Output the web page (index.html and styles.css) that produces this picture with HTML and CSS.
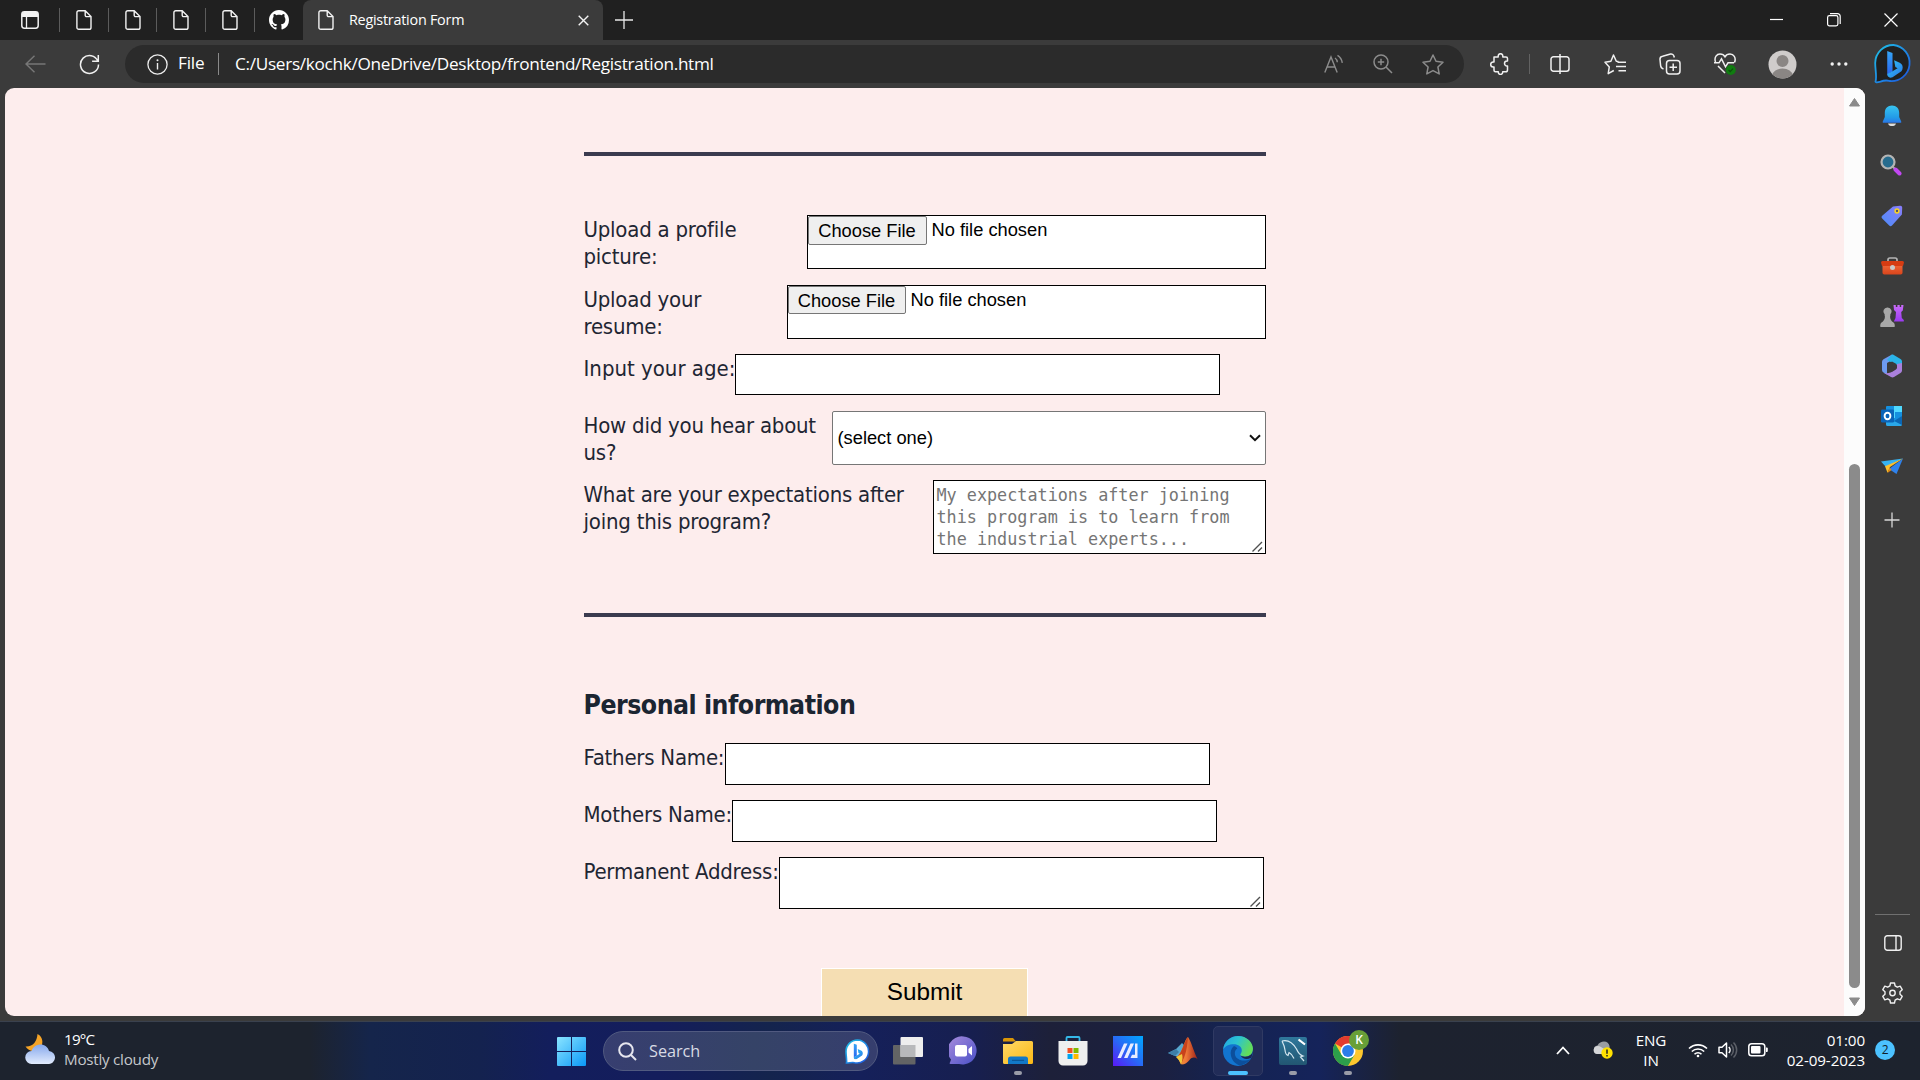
FILE: index.html
```html
<!DOCTYPE html>
<html lang="en">
<head>
<meta charset="utf-8">
<title>Registration Form</title>
<link rel="stylesheet" href="styles.css">
</head>
<body>
<svg class="defs" width="0" height="0" aria-hidden="true">
  <defs>
    <linearGradient id="gBlue" x1="0" y1="0" x2="1" y2="1"><stop offset="0" stop-color="#2fc6f5"/><stop offset="1" stop-color="#2a76e8"/></linearGradient>
    <linearGradient id="gBell" x1="0" y1="0" x2="0" y2="1"><stop offset="0" stop-color="#38c4f0"/><stop offset=".7" stop-color="#229be8"/><stop offset="1" stop-color="#2a76e8"/></linearGradient>
    <linearGradient id="gRing" x1="0" y1="0" x2="1" y2="1"><stop offset="0" stop-color="#1fc3e6"/><stop offset="1" stop-color="#1d52e0"/></linearGradient>
    <linearGradient id="gB" x1="0" y1="0" x2="0" y2="1"><stop offset="0" stop-color="#35a6f5"/><stop offset="1" stop-color="#2a65f0"/></linearGradient>
    <linearGradient id="gTag" x1="1" y1="0" x2="0" y2="1"><stop offset="0" stop-color="#8a7dfa"/><stop offset="1" stop-color="#4c8cf8"/></linearGradient>
    <linearGradient id="gOrange" x1="0" y1="0" x2="0" y2="1"><stop offset="0" stop-color="#f4703f"/><stop offset="1" stop-color="#d9451c"/></linearGradient>
    <linearGradient id="gPurple" x1="0" y1="0" x2="0" y2="1"><stop offset="0" stop-color="#c96cf8"/><stop offset="1" stop-color="#9a3af0"/></linearGradient>
    <linearGradient id="gWin" x1="0" y1="0" x2="1" y2="1"><stop offset="0" stop-color="#8ae4ff"/><stop offset="1" stop-color="#0a98f8"/></linearGradient>
    <linearGradient id="gCloud" x1="0" y1="0" x2="0" y2="1"><stop offset="0" stop-color="#86a8ec"/><stop offset="1" stop-color="#e2ecfd"/></linearGradient>
    <linearGradient id="gChat" x1="0" y1="0" x2="1" y2="1"><stop offset="0" stop-color="#a78bdc"/><stop offset="1" stop-color="#4a51c8"/></linearGradient>
    <linearGradient id="gFold" x1="0" y1="0" x2="1" y2="1"><stop offset="0" stop-color="#ffd968"/><stop offset="1" stop-color="#fbb815"/></linearGradient>
    <linearGradient id="gMu" x1="0" y1="1" x2="1" y2="0"><stop offset="0" stop-color="#5a18f5"/><stop offset=".5" stop-color="#276bf6"/><stop offset="1" stop-color="#00a8ff"/></linearGradient>
    <linearGradient id="gMat" x1="0" y1="0" x2="1" y2="0"><stop offset="0" stop-color="#e8a030"/><stop offset=".45" stop-color="#f0793a"/><stop offset="1" stop-color="#a02418"/></linearGradient>
    <linearGradient id="gEdgeTop" x1="0" y1="0" x2="1" y2=".4"><stop offset="0" stop-color="#22a3e4"/><stop offset=".5" stop-color="#2cc4d0"/><stop offset="1" stop-color="#62dc5a"/></linearGradient>
    <linearGradient id="gSql" x1="0" y1="0" x2="0" y2="1"><stop offset="0" stop-color="#2f789c"/><stop offset="1" stop-color="#225672"/></linearGradient>
    <symbol id="page" viewBox="0 0 16 20"><path d="M2.8.8h6.4L15 6.600v10.800a1.900 1.900 0 0 1-1.900 1.900H2.800A1.900 1.900 0 0 1 .9 17.400V2.700A1.900 1.900 0 0 1 2.800.8zM9.200.8v4.400a1.400 1.400 0 0 0 1.400 1.400H15" fill="none" stroke="#f2f2f2" stroke-width="1.400"/></symbol>
    <symbol id="bing" viewBox="0 0 14 24"><path d="M0 0l4.800 1.800v16.400L0 21z" fill="url(#gB)"/><path d="M6.200 8.200l5 2.300c3 1.500 3.500 5 1.500 7.500L4.800 23.300C2 24.400 0 23 0 20.500l4.800-2.600 4.500-2.600-2-1z" fill="url(#gBlue)"/></symbol>
  </defs>
</svg>

<div class="screen">
  <header class="tabs">
    <div class="tab-cell first"><svg width="18" height="18" viewBox="0 0 18 18"><rect x=".8" y=".8" width="16.400" height="16.400" rx="2.600" fill="none" stroke="#f2f2f2" stroke-width="1.500"/><path d="M1 3a2 2 0 0 1 2-2h12a2 2 0 0 1 2 2v3H1z" fill="#f2f2f2"/><path d="M5.500 6v11" stroke="#f2f2f2" stroke-width="1.300"/></svg></div>
    <div class="tab-cell"><svg width="16" height="20"><use href="#page"/></svg></div>
    <div class="tab-cell"><svg width="16" height="20"><use href="#page"/></svg></div>
    <div class="tab-cell"><svg width="16" height="20"><use href="#page"/></svg></div>
    <div class="tab-cell"><svg width="16" height="20"><use href="#page"/></svg></div>
    <div class="tab-cell last"><svg width="20" height="20" viewBox="0 0 16 16"><path fill="#fff" d="M8 0C3.580 0 0 3.580 0 8c0 3.540 2.290 6.530 5.470 7.590.4.070.55-.17.55-.38 0-.19-.01-.82-.01-1.490-2.010.37-2.530-.49-2.690-.94-.09-.23-.48-.94-.82-1.130-.28-.15-.68-.52-.01-.53.63-.01 1.080.58 1.230.82.72 1.210 1.870.87 2.330.66.07-.52.28-.87.51-1.070-1.780-.2-3.640-.89-3.640-3.950 0-.87.31-1.590.82-2.150-.08-.2-.36-1.020.08-2.120 0 0 .67-.21 2.200.82.64-.18 1.320-.27 2-.27s1.360.09 2 .27c1.530-1.040 2.200-.82 2.200-.82.44 1.100.16 1.920.08 2.120.51.56.82 1.270.82 2.150 0 3.070-1.870 3.750-3.650 3.950.29.25.54.73.54 1.480 0 1.070-.01 1.930-.01 2.200 0 .21.15.46.55.38A8.010 8.010 0 0 0 16 8c0-4.420-3.580-8-8-8z"/></svg></div>
    <div class="active-tab">
      <svg width="16" height="20"><use href="#page"/></svg>
      <span class="tab-title">Registration Form</span>
      <svg class="tab-close" width="11" height="11" viewBox="0 0 11 11"><path d="M.7.7l9.600 9.600M10.300.7L.7 10.300" stroke="#f2f2f2" stroke-width="1.400"/></svg>
    </div>
    <svg class="new-tab" width="18" height="18" viewBox="0 0 18 18"><path d="M9 0v18M0 9h18" stroke="#e8e8e8" stroke-width="1.300"/></svg>
    <div class="window-buttons">
      <svg width="14" height="14" viewBox="0 0 14 14"><path d="M0 6.500h13" stroke="#fff" stroke-width="1.200"/></svg>
      <svg width="14" height="14" viewBox="0 0 14 14"><rect x=".6" y="2.600" width="10.300" height="10.300" rx="1.800" fill="none" stroke="#fff" stroke-width="1.200"/><path d="M3 .7h7.500a2.600 2.600 0 0 1 2.700 2.700V11" fill="none" stroke="#fff" stroke-width="1.200"/></svg>
      <svg width="14" height="14" viewBox="0 0 14 14"><path d="M.5.5l13 13M13.500.5l-13 13" stroke="#fff" stroke-width="1.200"/></svg>
    </div>
  </header>

  <div class="toolbar">
    <div class="nav">
      <svg width="21" height="18" viewBox="0 0 21 18"><path d="M9.500.7L1 9l8.500 8.300M1 9h19.500" fill="none" stroke="#777" stroke-width="1.400"/></svg>
      <svg width="21" height="21" viewBox="0 0 21 21"><path d="M18.800 7A9 9 0 1 0 19.500 10.500M19.300 1v6.200h-6.200" fill="none" stroke="#f0f0f0" stroke-width="1.500"/></svg>
    </div>
    <div class="address">
      <svg width="21" height="21" viewBox="0 0 21 21"><circle cx="10.500" cy="10.500" r="9.600" fill="none" stroke="#eee" stroke-width="1.300"/><path d="M10.500 9v6.500" stroke="#eee" stroke-width="1.400"/><circle cx="10.500" cy="6.200" r="1" fill="#eee"/></svg>
      <span class="scheme">File</span>
      <span class="url">C:/Users/kochk/OneDrive/Desktop/frontend/Registration.html</span>
      <div class="address-icons">
        <svg width="20" height="20" viewBox="0 0 20 20" fill="none" stroke="#8c8c8c" stroke-width="1.400"><path d="M.8 18.500L7 3l6.200 15.500M3 13h8M11 4c1.500 1 2.200 2.500 2.300 4.300M13.500 1.300c2.500 1.500 4.300 4 4.800 7.500"/></svg>
        <svg width="20" height="20" viewBox="0 0 20 20" fill="none" stroke="#8c8c8c" stroke-width="1.500"><circle cx="8" cy="8" r="7"/><path d="M13 13l6 6M8 4.800v6.400M4.800 8h6.400"/></svg>
        <svg width="22" height="21" viewBox="0 0 22 21" fill="none" stroke="#8c8c8c" stroke-width="1.500" stroke-linejoin="round"><path d="M11 1l3 6.300 7 .9-5.100 4.800 1.300 6.900L11 16.600l-6.200 3.300L6.100 13 1 8.200l7-.9z"/></svg>
      </div>
    </div>
    <div class="ext"><svg width="20" height="22" viewBox="0 0 20 22" fill="none" stroke="#f0f0f0" stroke-width="1.500" stroke-linejoin="round"><path d="M4 4h4.200V3a2.300 2.300 0 0 1 4.600 0v1H16a1.500 1.500 0 0 1 1.500 1.500V8H17a2 2 0 0 0 0 5h.5v4a1.800 1.800 0 0 1-1.800 1.800h-3v.4a2.200 2.200 0 0 1-4.400 0v-.4H5.500A1.500 1.500 0 0 1 4 17.300V14h-.8a2.500 2.500 0 0 1 0-5H4z"/></svg></div>
    <div class="tools">
      <svg width="20" height="20" viewBox="0 0 20 20" fill="none" stroke="#f0f0f0" stroke-width="1.500"><path d="M7 2.500H3.500A2.500 2.500 0 0 0 1 5v10a2.500 2.500 0 0 0 2.500 2.500H7M10 2.500H7v15h3M13 2.500h3.500A2.500 2.500 0 0 1 19 5v10a2.500 2.500 0 0 1-2.500 2.500H10" stroke="none"/><path d="M9.800 2.700H3.500A2.500 2.500 0 0 0 1 5.200v9.600a2.500 2.500 0 0 0 2.500 2.500h6.300M10.200 2.700h6.300A2.500 2.500 0 0 1 19 5.200v9.600a2.500 2.500 0 0 1-2.500 2.500h-6.300M10 0v20"/></svg>
      <svg width="22" height="21" viewBox="0 0 22 21" fill="none" stroke="#f0f0f0" stroke-width="1.500" stroke-linejoin="round"><path d="M14.500 7.600l-2.200-.3L9.500 1 6.900 7.300 1 8.200l4.300 4.700-1.100 6.800 5.600-3.200M13.500 8.300H22M12 12.500h10M14.500 16.700H22"/></svg>
      <svg width="22" height="22" viewBox="0 0 22 22" fill="none" stroke="#f0f0f0" stroke-width="1.500"><rect x="7.500" y="7.500" width="13.500" height="13.500" rx="3"/><path d="M14.200 10.500v7.500M10.500 14.200H18M4.500 16A4 4 0 0 1 1.600 12.500L1 6.500a3 3 0 0 1 2.600-3.200L11.500 1a3 3 0 0 1 3.500 2.500l.3 1"/></svg>
      <svg width="22" height="22" viewBox="0 0 22 22" fill="none" stroke="#f0f0f0" stroke-width="1.500"><path d="M1.500 9C-.2 4 3 1 6 1c2.200 0 4 1 5 2.800C12 2 14 1 16 1c3.500 0 6.500 3.500 4.500 8.500M0 9.800h5l2.500-4 4 8 2.500-4H20M4 13l7 7"/><circle cx="16.800" cy="17" r="5" fill="#107c10" stroke="none"/><path d="M14.600 17l1.600 1.600 2.800-3" stroke="#0b4f0b" stroke-width="1.200"/></svg>
      <svg class="wide" width="29" height="29" viewBox="0 0 29 29"><defs><clipPath id="av"><circle cx="14.500" cy="14.500" r="14"/></clipPath></defs><circle cx="14.500" cy="14.500" r="14" fill="#cfcccb"/><g clip-path="url(#av)" fill="#8a8684"><circle cx="14.500" cy="11" r="6"/><ellipse cx="14.500" cy="25" rx="10" ry="6.500"/></g></svg>
      <svg width="18" height="6" viewBox="0 0 18 6" fill="#f2f2f2"><circle cx="2.200" cy="3" r="1.700"/><circle cx="9" cy="3" r="1.700"/><circle cx="15.800" cy="3" r="1.700"/></svg>
    </div>
    <div class="copilot"><svg width="39" height="40" viewBox="0 0 39 40"><path d="M19.500 1a18 18 0 1 1-4 36c-3-1-6-.5-9 .7-4 1-5.500.8-4.900-.7C3 33 1.200 26 1.200 19A18.200 18.200 0 0 1 19.500 1z" fill="#202020" stroke="url(#gRing)" stroke-width="1.800"/><svg x="12.500" y="7" width="17" height="27" viewBox="0 0 14 24"><use href="#bing" width="14" height="24"/></svg></svg></div>
  </div>

  <div class="middle">
    <main class="viewport">
      <div class="document">
        <form class="form">
          <section class="group upload">
            <div class="row"><label class="w-pic">Upload a profile picture:</label><div class="box file"><button type="button">Choose File</button><span>No file chosen</span></div></div>
            <div class="row"><label class="w-res">Upload your resume:</label><div class="box file"><button type="button">Choose File</button><span>No file chosen</span></div></div>
            <div class="row"><label class="w-age">Input your age:</label><input class="box line age" type="text"></div>
            <div class="row"><label class="w-hear">How did you hear about us?</label><div class="box select"><span>(select one)</span><svg width="12" height="8" viewBox="0 0 12 8"><path d="M1 1.200l5 5 5-5" fill="none" stroke="#111" stroke-width="2"/></svg></div></div>
            <div class="row"><label class="w-exp">What are your expectations after joing this program?</label><textarea class="box grip expect" placeholder="My expectations after joining this program is to learn from the industrial experts..."></textarea></div>
          </section>
          <section class="group personal">
            <h2>Personal information</h2>
            <div class="row"><label class="w-father">Fathers Name:</label><input class="box line" type="text"></div>
            <div class="row"><label class="w-mother">Mothers Name:</label><input class="box line" type="text"></div>
            <div class="row"><label class="w-addr">Permanent Address:</label><textarea class="box grip addr"></textarea></div>
          </section>
          <button class="submit" type="button">Submit</button>
        </form>
      </div>
      <div class="scroll">
        <svg width="11" height="9" viewBox="0 0 11 9"><path d="M5.500.5L10.500 8h-10z" fill="#8b8b8b" stroke="#8b8b8b" stroke-linejoin="round"/></svg>
        <div class="thumb"></div>
        <svg width="11" height="9" viewBox="0 0 11 9"><path d="M5.500 8.500L10.500 1h-10z" fill="#8b8b8b" stroke="#8b8b8b" stroke-linejoin="round"/></svg>
      </div>
    </main>
    <aside class="sidebar">
      <div class="cell"><svg width="20" height="22" viewBox="0 0 20 22"><path d="M6 18.500h8c-1 2.500-2.500 2.500-4 2.500s-3 0-4-2.500z" fill="#ddd"/><path d="M10 .5c4.300 0 7.200 3 7.200 7.200V12l2 4.500c.3.800 0 1.300-.8 1.300H1.600c-.8 0-1.100-.5-.8-1.300l2-4.500V7.700C2.800 3.500 5.700.5 10 .5z" fill="url(#gBell)"/></svg></div>
      <div class="cell mag"><svg width="22" height="22" viewBox="0 0 22 22"><path d="M12 12l4 4" stroke="#aaa" stroke-width="2"/><path d="M15.500 15.500l4 4" stroke="#c247f2" stroke-width="4" stroke-linecap="round"/><circle cx="8" cy="8" r="6.500" fill="#276c8e" stroke="#b4b4b4" stroke-width="2.200"/></svg></div>
      <div class="cell"><svg width="22" height="22" viewBox="0 0 22 22"><path d="M12 1.500l7-.8a2 2 0 0 1 2.200 2.100l-.3 6.700L11 20.500a2 2 0 0 1-2.800 0L1.200 13.500a2 2 0 0 1 0-2.800z" fill="url(#gTag)"/><circle cx="16" cy="6" r="1.900" fill="#4b5170" stroke="#f9d324" stroke-width="1.500"/></svg></div>
      <div class="cell"><svg width="23" height="18" viewBox="0 0 23 18"><path d="M7 5V2.800A1.800 1.800 0 0 1 8.800 1h5.400A1.800 1.800 0 0 1 16 2.800V5" fill="none" stroke="#b4b4b4" stroke-width="1.700"/><rect x="1.500" y="5" width="20" height="12.500" rx="1.800" fill="url(#gOrange)"/><path d="M0 5.500A1.500 1.500 0 0 1 1.500 4h20A1.500 1.500 0 0 1 23 5.500L22 9H1z" fill="#d63c12"/><circle cx="11.500" cy="10.500" r="2.500" fill="#c9c9c9"/></svg></div>
      <div class="cell"><svg width="24" height="24" viewBox="0 0 24 24"><path d="M13.500 1h2.300v2h1.600V1h2.300v2h1.500V1h2.300l-.7 5.500-1.600 1.500.6 6 2 2v1.500h-10l1.700-3.500.5-6-2-2z" fill="url(#gPurple)"/><path d="M7.500 3.500a4 4 0 0 1 2.800 7v1.700H10c.2 3.300 1.300 4.800 3.500 6.300 1.500 1 1.500 4 1 4.500H.5c-.5-.5-.5-3.500 1-4.500C3.700 17 4.800 15.500 5 12.200h-.3v-1.700a4 4 0 0 1 2.800-7z" fill="#a8a8a8"/></svg></div>
      <div class="cell"><svg width="22" height="24" viewBox="0 0 22 24"><path d="M11 .5L2.500 5.300A3 3 0 0 0 1 8v8a3 3 0 0 0 1.500 2.500L6 20.500V9l7-4z" fill="#6d9af0"/><path d="M11 .5h1L19.500 5A3 3 0 0 1 21 7.500V14l-5.500-3-9.500-5z" fill="#2ab4e8"/><path d="M21 9v7.500a3 3 0 0 1-1.500 2.500L13 23a3 3 0 0 1-3 0l-7-4c4 .5 7 0 11-3l2-2V10z" fill="#aa80dc"/><path d="M11 7.500l4.500 2.500v5L11 17.500 6.500 15v-5z" fill="#3b3b3b"/></svg></div>
      <div class="cell"><svg width="22" height="22" viewBox="0 0 22 22"><rect x="5" y="1" width="16" height="17" rx="1" fill="#1590df"/><path d="M13 1h8v6h-8zM9 7h5v6H9z" fill="#50d9ff"/><path d="M5 12l8 5 8-6v8.500a1.500 1.500 0 0 1-1.500 1.500h-13A1.500 1.500 0 0 1 5 19.500z" fill="#2aa8ea"/><path d="M21 11v9l-8-4z" fill="#0b66b4"/><rect x="0" y="4.500" width="13" height="13" rx="1.200" fill="#0a64b8"/><ellipse cx="6.500" cy="11" rx="2.900" ry="3.300" fill="none" stroke="#fff" stroke-width="1.900"/></svg></div>
      <div class="cell"><svg width="22" height="17" viewBox="0 0 22 17"><path d="M0 3.500L22 .5 5 9z" fill="#35b2f2"/><path d="M22 .5L15.500 16 8 11z" fill="#2f82ec"/><path d="M22 .5L4 8.200l2.500 6.500L9 9z" fill="#fbc02c"/><path d="M8.500 9.500L6.500 15l4-3z" fill="#e98a10"/></svg></div>
      <div class="cell plus"><svg width="16" height="16" viewBox="0 0 16 16"><path d="M8 .5v15M.5 8h15" stroke="#d8d8d8" stroke-width="1.300"/></svg></div>
      <div class="side-bottom">
        <svg width="18" height="16" viewBox="0 0 18 16" fill="none" stroke="#f0f0f0" stroke-width="1.400"><rect x=".8" y=".8" width="16.400" height="14.400" rx="2.500"/><path d="M12 1v14"/></svg>
        <svg width="21" height="22" viewBox="0 0 21 22" fill="none" stroke="#f0f0f0" stroke-width="1.400" stroke-linejoin="round"><path d="M8.500 1h4l.6 2.900 2.200 1.300 2.900-1 2 3.500-2.200 2v2.600l2.200 2-2 3.500-2.900-1-2.200 1.300-.6 2.900h-4l-.6-2.900-2.200-1.300-2.900 1-2-3.500 2.200-2V9.700l-2.200-2 2-3.500 2.900 1 2.200-1.300z"/><circle cx="10.500" cy="11" r="2.700"/></svg>
      </div>
    </aside>
  </div>

  <footer class="taskbar">
    <div class="weather">
      <svg width="30" height="30" viewBox="0 0 30 30"><path d="M12.500 0c6 3 6.500 11 1.500 15-4.500 3.500-11 2-13.500-2.500C8 13 12 7.500 12.500 0z" fill="#f5a428"/><path d="M7 30a6.500 6.500 0 0 1-.5-13C8 12.500 12 10.500 15.500 10.500c4 0 7.500 2.500 8.500 6.500a6.500 6.500 0 0 1-1 13z" fill="url(#gCloud)"/></svg>
      <div class="weather-text"><span class="temp">19°C</span><span class="sky">Mostly cloudy</span></div>
    </div>
    <svg class="start" width="29" height="29" viewBox="0 0 29 29" fill="url(#gWin)"><path d="M1 0h13v14H0V1a1 1 0 0 1 1-1zM15 0h13a1 1 0 0 1 1 1v13H15zM0 15h14v14H1a1 1 0 0 1-1-1zM15 15h14v13a1 1 0 0 1-1 1H15z"/></svg>
    <div class="search">
      <svg width="19" height="19" viewBox="0 0 19 19" fill="none" stroke="#e6e6ee" stroke-width="2"><circle cx="8" cy="8" r="6.800"/><path d="M13 13l5 5"/></svg>
      <span>Search</span>
      <svg class="search-bing" width="25" height="25" viewBox="0 0 25 25"><path d="M12.500 1a11.500 11.500 0 1 1-3 22.700c-2-.8-5 .3-8 .3.5-3-.5-7-.5-11.500A11.500 11.500 0 0 1 12.500 1z" fill="#fff" stroke="url(#gRing)" stroke-width="1.600"/><svg x="8" y="4.500" width="10.500" height="16" viewBox="0 0 14 24"><use href="#bing" width="14" height="24"/></svg></svg>
    </div>
    <div class="apps">
      <div class="app"><svg width="30" height="28" viewBox="0 0 30 28"><rect x="0" y="8" width="22.500" height="19.500" rx="1" fill="#636465"/><rect x="7.500" y="0" width="22.500" height="20" rx="1" fill="#eee"/><path d="M7.500 8h15v12h-15z" fill="#b8b9bb"/></svg></div>
      <div class="app"><svg width="29" height="29" viewBox="0 0 29 29"><path d="M14.500.5A14 14 0 1 1 10 28H1.500C.5 28 .3 27 1 26.500l1-3A14 14 0 0 1 14.500.5z" fill="url(#gChat)"/><rect x="6" y="9" width="12" height="11.500" rx="2" fill="#fff"/><path d="M19.500 13l3.500-3v9.500l-3.500-3z" fill="#fff"/></svg></div>
      <div class="app run"><svg width="30" height="28" viewBox="0 0 30 28"><path d="M0 2.500A1.500 1.500 0 0 1 1.500 1H10l3 3.500H0z" fill="#d99507"/><path d="M0 7h9l4-3h15.500A1.500 1.500 0 0 1 30 5.500v20a1.500 1.500 0 0 1-1.500 1.500h-27A1.500 1.500 0 0 1 0 25.500z" fill="url(#gFold)"/><path d="M5 27v-5a2.500 2.500 0 0 1 2.500-2.500h15A2.500 2.500 0 0 1 25 22v5z" fill="#1278c8"/><path d="M9 23.300h12" stroke="#0a4f8c"/></svg></div>
      <div class="app"><svg width="30" height="30" viewBox="0 0 30 30"><path d="M8.500 6V2a1 1 0 0 1 1-1h11a1 1 0 0 1 1 1v4" fill="none" stroke="#35b8e8" stroke-width="1.800"/><path d="M.5 5h29v20a4.500 4.500 0 0 1-4.500 4.500H5A4.500 4.500 0 0 1 .5 25z" fill="#efefef"/><path d="M9.500 12h5v5h-5z" fill="#f25022"/><path d="M15.500 12h5v5h-5z" fill="#7fba00"/><path d="M9.500 18h5v5h-5z" fill="#00a4ef"/><path d="M15.500 18h5v5h-5z" fill="#ffb900"/></svg></div>
      <div class="app"><svg width="30" height="30" viewBox="0 0 30 30"><path d="M0 0h30v30H0z" fill="url(#gMu)"/><path d="M4.500 22L11 7.500h3.500L8 22zM11 22l6.500-14.500H21L14.500 22zM22 7.500h2.500V22H17.500l1.500-3.300h3z" fill="#e8ecff"/></svg></div>
      <div class="app"><svg width="30" height="28" viewBox="0 0 30 28"><path d="M0 16l8-4 6-6 2 2-5 12-4-1z" fill="#58a8cf"/><path d="M0 16l8-4 3 3-4 4z" fill="#3d7ea8"/><path d="M20 0c3 4 5.500 14 9.500 22-3-2-5.500-2-8 1-2 2.500-4.500 4.500-8 4.500-1-3-2.500-5-5-7.500C14 17 16.500 2 20 0z" fill="url(#gMat)"/><path d="M20 0c-.5 8-2 20-7.500 27-1-3-1.500-5-4-7C14 17 16 4 20 0z" fill="#c8421c"/><path d="M14 17c1 3 .5 7-1 10.500-1-3-2.500-5-5-7.500z" fill="#f0c83c"/></svg></div>
      <div class="app run current"><svg width="30" height="30" viewBox="0 0 30 30"><circle cx="15" cy="15" r="15" fill="#1274cf"/><path d="M.2 13.500C1 5.500 7.500 0 15 0c9 0 15 6.500 15 13 0 5-3.500 7.700-8 7.700-3 0-4.700-1-4.700-2.200 0-.8 1.500-1.500 1.500-4.300 0-3.500-3.600-6-8-6C6 8.200 2 10 .2 13.500z" fill="url(#gEdgeTop)"/><path d="M11 10c-3 2.500-4 6-3 10 1.300 5 5 8.500 9 9.500 4-.6 8-3 10.500-6.500-6 3-14 1.500-15.500-4-.5-3 .3-5.500 2.300-6.500C13.800 11.200 12.500 10.500 11 10z" fill="#0c4f9c"/><path d="M30 13c0 5-3.500 7.700-8 7.700-2 0-3.500-.5-4.300-1.200C19 23 24 24 27.500 22l.5 1c1-2.500 2.200-6.500 2-10z" fill="#1b2552"/></svg></div>
      <div class="app run"><svg width="28" height="28" viewBox="0 0 28 28"><rect width="28" height="28" rx="2" fill="url(#gSql)"/><path d="M3 4c6-1.500 11 2 14.500 8 1.500 3.500 3 6 6.500 7l-2.500 1 3.500 4M3 4c1.500 3 2.500 5 3 9 .3 3 1.500 5 3 5.500l1-3c2 1 4 3.500 5 6" fill="none" stroke="#d5e7f0" stroke-width="1.200"/><path d="M20 2l2 3 3 1 1 2-6-4z" fill="#fff"/><path d="M19.500 2.500L26 7.500" stroke="#fff" stroke-width="2.200"/></svg></div>
      <div class="app run chrome"><svg width="30" height="30" viewBox="0 0 30 30"><circle cx="15" cy="15" r="15" fill="#fdc72e"/><path d="M15 15L2 7.500A15 15 0 0 1 28 7.500H15z" fill="#e33b2e"/><path d="M2 7.500A15 15 0 0 0 15 30l6.500-11.200L15 15 8.500 18.700z" fill="#2c9f4b"/><circle cx="15" cy="15" r="7.500" fill="#fff"/><circle cx="15" cy="15" r="5.900" fill="#2b7de9"/></svg><span class="k-badge">K</span></div>
    </div>
    <div class="tray">
      <svg class="chev" width="14" height="9" viewBox="0 0 14 9"><path d="M1 8l6-6.500L13 8" fill="none" stroke="#fff" stroke-width="1.800"/></svg>
      <svg class="cloud" width="20" height="18" viewBox="0 0 20 18"><path d="M4.500 13a4.300 4.300 0 0 1 0-8.500C6 1.500 8.500.5 11 .5c3 0 5 2 5.500 4.500L17 13z" fill="#9a9da1"/><path d="M1 11C0 8 1.500 5.500 4.500 5c3 0 4 1.500 7 3l-2 5H4C2.500 13 1.500 12 1 11z" fill="#d5d6d8"/><circle cx="14" cy="12" r="5.700" fill="#ffe100"/><path d="M14 8.500v4.200M14 14v1.500" stroke="#222" stroke-width="1.500"/></svg>
      <div class="lang"><span>ENG</span><span>IN</span></div>
      <div class="status">
        <svg width="20" height="15" viewBox="0 0 20 15" fill="none" stroke="#fff" stroke-width="1.600"><path d="M1 5.500a13 13 0 0 1 18 0M3.800 8.500a9 9 0 0 1 12.400 0M6.500 11.300a5 5 0 0 1 7 0"/><circle cx="10" cy="13" r="1.300" fill="#fff" stroke="none"/></svg>
        <svg width="20" height="18" viewBox="0 0 20 18" fill="none" stroke="#fff" stroke-width="1.500"><path d="M1 6.200h3L8.500 2v14L4 11.800H1z" stroke-linejoin="round"/><path d="M10.800 6a4.300 4.300 0 0 1 0 6"/><path d="M13 3.500a7.500 7.500 0 0 1 0 11M15.500 1.500a10.500 10.500 0 0 1 0 15" stroke="#5c6068"/></svg>
        <svg width="20" height="14" viewBox="0 0 20 14"><rect x=".8" y=".8" width="16" height="12" rx="2.800" fill="none" stroke="#fff" stroke-width="1.500"/><rect x="3" y="3" width="9.500" height="7.600" rx="1" fill="#fff"/><path d="M18 4.500h.8a1 1 0 0 1 1 1v2.500a1 1 0 0 1-1 1H18z" fill="#fff"/></svg>
      </div>
      <div class="clock"><span>01:00</span><span>02-09-2023</span></div>
      <span class="count">2</span>
    </div>
  </footer>
</div>
</body>
</html>
```
FILE: styles.css
```css
* { box-sizing: border-box; }

body {
  margin: 0;
  background: #3b3b3b;
  overflow: hidden;
  font-family: "Open Sans", "Noto Sans", sans-serif;
}

.defs { display: block; position: absolute; }
svg { display: block; flex: none; }

.screen {
  width: 1920px;
  height: 1080px;
  display: grid;
  grid-template-rows: 40px 48px 933px 59px;
}

/* Tab strip */
.tabs { display: flex; align-items: center; background: #202020; }
.tab-cell {
  width: 48.7px;
  height: 24px;
  display: flex;
  align-items: center;
  justify-content: center;
  border-right: 1px solid #5c5c5c;
}
.tab-cell.first { width: 60px; }
.tab-cell.last { width: 48.2px; border: 0; }
.active-tab {
  width: 300px;
  height: 40px;
  display: flex;
  align-items: center;
  padding: 0 14px 0 15px;
  background: #3b3b3b;
  border-radius: 8px 8px 0 0;
}
.tab-title { margin-left: 15px; padding-bottom: 2px; font-size: 14.4px; letter-spacing: -0.25px; color: #fff; }
.tab-close { margin-left: auto; }
.new-tab { margin-left: 12px; }
.window-buttons { display: flex; gap: 43px; margin-left: auto; margin-right: 22px; }

/* Toolbar */
.toolbar { display: flex; align-items: center; background: #3b3b3b; }
.nav { width: 125px; display: flex; gap: 33px; padding-left: 25px; align-items: center; }
.address {
  width: 1339px;
  height: 38px;
  display: flex;
  align-items: center;
  padding-left: 22px;
  background: #2b2b2b;
  border-radius: 19px;
  color: #fff;
  font-size: 17.2px;
}
.scheme {
  width: 41px;
  height: 22px;
  margin-left: 10px;
  line-height: 19px;
  border-right: 1px solid #8a8a8a;
  letter-spacing: -0.2px;
}
.url { margin-left: 16px; padding-bottom: 2px; letter-spacing: -0.3px; white-space: nowrap; }
.address-icons { display: flex; gap: 29px; margin-left: auto; margin-right: 20px; }
.ext {
  width: 66px;
  height: 20px;
  display: flex;
  align-items: center;
  padding-left: 26px;
  border-right: 1px solid #626262;
}
.tools { display: flex; align-items: center; }
.tools svg { margin: 0 16.5px; }
.tools svg:first-child { margin: 0 17.5px 0 19.5px; }
.tools .wide { margin: 0 16px 0 15.5px; }
.tools svg:last-child { margin-left: 17.500px; }
.copilot { margin-left: auto; margin-right: 7px; }

/* Page area */
.middle { display: grid; grid-template-columns: 1860px 1fr; padding-left: 5px; background: #3b3b3b; }
.viewport {
  height: 928px;
  display: grid;
  grid-template-columns: 1839px 21px;
  border-radius: 9px;
  overflow: hidden;
  background: #fdeded;
}
.document { height: 928px; overflow: hidden; }

.form {
  width: 682px;
  margin: 0 auto;
  padding-top: 64px;
  color: #1f2633;
}
.group { border-top: 4px solid #3b3b4f; }
.upload { height: 461px; padding-top: 59px; }
.personal { height: 355px; padding-top: 70px; }

.row { display: flex; align-items: flex-start; margin-bottom: 15px; }
.upload .row:first-child { margin-bottom: 16px; }
.upload .row:nth-child(3) { margin-bottom: 16px; }
label {
  flex: none;
  padding-top: 1px;
  margin-bottom: -1px;
  font-family: "DejaVu Sans Condensed", "DejaVu Sans", sans-serif;
  font-stretch: condensed;
  font-size: 22px;
  line-height: 27px;
  letter-spacing: -0.23px;
}
.w-pic { width: 223px; padding-right: 50px; }
.w-res { width: 203px; padding-right: 50px; }
.w-age { width: 151px; white-space: nowrap; letter-spacing: 0; }
.w-hear { width: 248px; }
.w-exp { width: 349px; padding-right: 20px; }
.w-father { width: 141px; white-space: nowrap; }
.w-mother { width: 148px; white-space: nowrap; }
.w-addr { width: 195px; white-space: nowrap; }

.box {
  flex: 1;
  min-width: 0;
  margin: 0;
  border: 1px solid #000;
  border-radius: 0;
  background: #fff;
  outline: 0;
  color: #000;
  font-family: "Liberation Sans", Arial, sans-serif;
  font-size: 18.3px;
}
.line { flex: none; width: 485px; height: 42px; }
.line.age { height: 41px; }
.file { height: 54px; display: flex; align-items: flex-start; }
.file button {
  height: 29px;
  width: 119px;
  padding: 0;
  border: 1px solid #767676;
  border-radius: 2px;
  background: #efefef;
  font: inherit;
  line-height: 27px;
  color: #000;
}
.w-res + .file button { width: 118px; height: 28px; }
.file span { margin-left: 5px; line-height: 28px; }
.select {
  height: 54px;
  display: flex;
  align-items: center;
  justify-content: space-between;
  padding: 0 4px 0 5px;
  border-color: #767676;
  border-radius: 2px;
}
.grip {
  resize: none;
  overflow: hidden;
  background: #fff url("data:image/svg+xml,%3Csvg xmlns='http://www.w3.org/2000/svg' width='11' height='11'%3E%3Cpath d='M.5 10.500L10 1M6 10.500l4-4' stroke='%23505050' stroke-width='1.400'/%3E%3C/svg%3E") no-repeat right 2px bottom 1px;
}
.expect {
  height: 74px;
  padding: 3px;
  font-family: "DejaVu Sans Mono", "Liberation Mono", monospace;
  font-size: 16.8px;
  line-height: 22px;
}
.expect::placeholder { color: #757575; }
.addr { flex: none; width: 485px; height: 52px; }

h2 {
  margin: 0 0 21px;
  font-family: "DejaVu Sans Condensed", "DejaVu Sans", sans-serif;
  font-stretch: condensed;
  font-size: 26.4px;
  letter-spacing: -0.5px;
  line-height: 35px;
  color: #1b2531;
  white-space: nowrap;
}
.submit {
  display: block;
  width: 207px;
  height: 54px;
  margin: 0 auto;
  padding: 0 0 6px;
  border: 1px solid #fff;
  background: #f5deb3;
  font-family: "Liberation Sans", Arial, sans-serif;
  font-size: 24.3px;
  color: #000;
}

/* Scrollbar */
.scroll { background: #fcfcfc; display: flex; flex-direction: column; align-items: center; padding: 10px 0; }
.thumb { width: 11px; height: 524px; margin: 357px 0 9px; border-radius: 6px; background: #8b8b8b; }

/* Edge sidebar */
.sidebar { display: flex; flex-direction: column; padding: 3px 1px 0 0; }
.cell { height: 50px; display: flex; align-items: center; justify-content: center; }
.cell.mag { padding: 0 2px 2px 0; }
.cell.plus { height: 58px; }
.side-bottom {
  width: 35px;
  margin: auto auto 17px 10px;
  padding-top: 20px;
  border-top: 1px solid #707070;
  display: flex;
  flex-direction: column;
  align-items: center;
  gap: 31px;
}

/* Taskbar */
.taskbar {
  display: flex;
  align-items: center;
  border-top: 1px solid #3a414e;
  color: #fff;
  font-size: 15.2px;
  background: linear-gradient(90deg, #1d232e 0, #1d232e 310px, #15254b 370px, #14224f 480px, #131e5c 550px, #141d5c 660px, #14244d 770px, #15205a 860px, #171f50 970px, #1d2039 1050px, #1b2040 1160px, #142352 1230px, #15235a 1320px, #1d222f 1400px, #1d232e 100%);
}
.weather { width: 532px; display: flex; padding: 0 0 4px 25px; align-items: center; }
.weather-text { display: flex; flex-direction: column; margin-left: 9px; line-height: 20px; letter-spacing: -0.25px; }
.temp { letter-spacing: -0.8px; }
.sky { color: #c5c8cc; }
.start { margin-left: 25px; }
.search {
  width: 275px;
  height: 40px;
  margin-left: 17px;
  display: flex;
  align-items: center;
  padding: 0 7px 0 14px;
  border: 1px solid #515a80;
  border-radius: 20px;
  background: linear-gradient(90deg, #373e70 0, #354367 55%, #363e6e 100%);
  color: #d8dbe5;
  font-size: 16.2px;
}
.search span { margin-left: 12px; padding-bottom: 1px; }
.search-bing { margin-left: auto; }
.apps { display: flex; }
.app {
  width: 50px;
  height: 50px;
  margin-left: 5px;
  display: flex;
  align-items: center;
  justify-content: center;
  position: relative;
  border-radius: 5px;
}
.app svg { margin-bottom: 1px; }
.app.run::after {
  content: "";
  position: absolute;
  left: 21px;
  bottom: 1px;
  width: 8px;
  height: 4px;
  border-radius: 2px;
  background: #9a9ca8;
}
.app.current { background: #212c58; border: 1px solid #303a63; }
.app.current::after { left: 14px; bottom: 0; width: 20px; background: #4cc2ff; }
.k-badge {
  position: absolute;
  left: 26px;
  top: 4px;
  width: 20px;
  height: 20px;
  border-radius: 50%;
  background: #689f38;
  font-size: 12px;
  font-weight: 600;
  line-height: 20px;
  text-align: center;
}
.tray { display: flex; align-items: center; margin-left: auto; padding: 0 25px 2px 0; letter-spacing: -0.2px; }
.cloud { margin-left: 23px; }
.lang { width: 40px; margin-left: 18px; text-align: center; display: flex; flex-direction: column; line-height: 20px; }
.status { display: flex; align-items: center; gap: 10px; margin-left: 17px; }
.clock { width: 98px; padding-right: 1px; letter-spacing: -0.1px; display: flex; flex-direction: column; text-align: right; line-height: 20px; white-space: nowrap; }
.count {
  width: 20px;
  height: 20px;
  margin-left: 9px;
  border-radius: 50%;
  background: #4cc2ff;
  color: #10202c;
  font-size: 12px;
  line-height: 20px;
  text-align: center;
}
```
